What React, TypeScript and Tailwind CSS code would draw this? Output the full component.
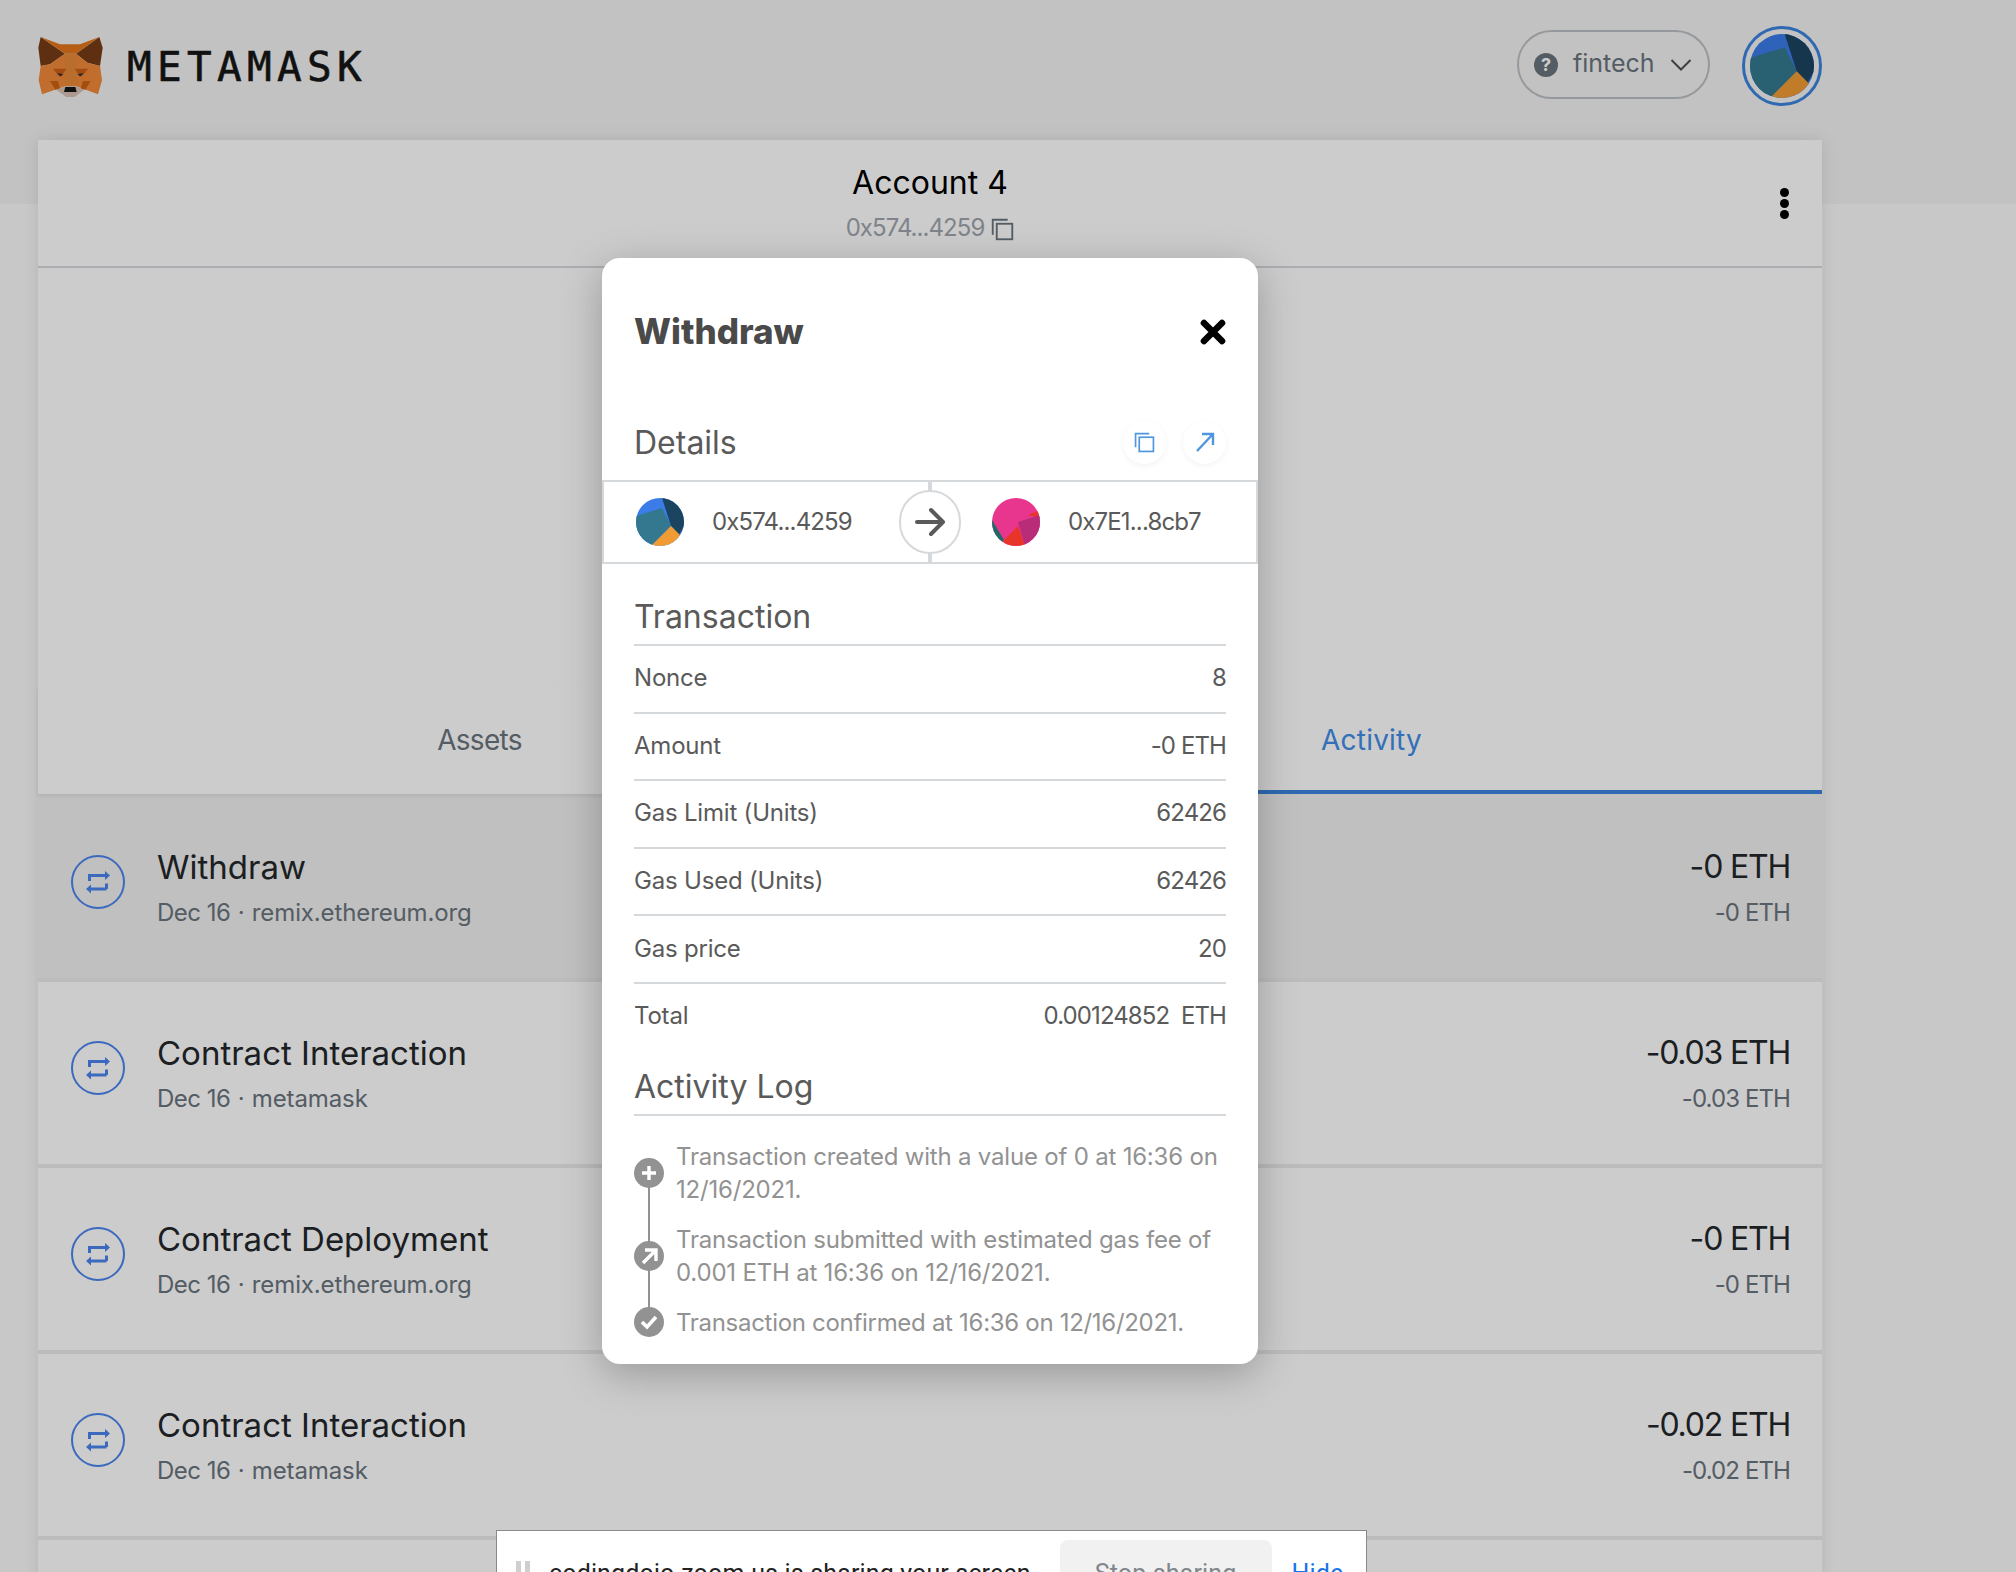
import React from "react";

const rows = [
  { t: "Withdraw", s: "remix.ethereum.org", a: "-0 ETH", hl: true },
  { t: "Contract Interaction", s: "metamask", a: "-0.03 ETH" },
  { t: "Contract Deployment", s: "remix.ethereum.org", a: "-0 ETH" },
  { t: "Contract Interaction", s: "metamask", a: "-0.02 ETH" },
  { t: "", s: "", a: "", empty: true },
];

const details: [string, string][] = [
  ["Nonce", "8"],
  ["Amount", "-0 ETH"],
  ["Gas Limit (Units)", "62426"],
  ["Gas Used (Units)", "62426"],
  ["Gas price", "20"],
];

function Fox() {
  return (
    <svg width="65" height="60" viewBox="0 0 195 180">
      <polygon points="8,0 81,50 36,82 8,87 1,32" fill="#763D16" />
      <polygon points="184,0 114,50 148,77 186,87 194,32" fill="#763D16" />
      <polygon points="8,0 66,22 126,22 184,0 114,50 81,50" fill="#E4761B" />
      <polygon points="8,87 36,82 81,50 114,50 148,77 186,87 192,130 180,172 135,155 115,148 82,148 60,155 12,172 2,130" fill="#F0893A" />
      <polygon points="81,50 114,50 118,140 80,140" fill="#E88A3A" />
      <polygon points="45,95 85,95 70,120 60,115" fill="#CD6116" />
      <polygon points="150,95 110,95 125,120 135,115" fill="#CD6116" />
      <polygon points="36,132 60,132 66,155 52,158" fill="#CD6116" />
      <polygon points="158,132 135,132 128,155 142,158" fill="#CD6116" />
      <polygon points="55,158 80,148 115,148 138,158 110,180 85,180" fill="#D7C1B3" />
      <polygon points="82,150 112,150 116,165 78,165" fill="#161616" />
      <polygon points="58,108 76,112 66,118" fill="#233447" />
      <polygon points="136,108 118,112 128,118" fill="#233447" />
    </svg>
  );
}

function AccountIcon({ size }: { size: number }) {
  return (
    <svg width={size} height={size} viewBox="0 0 48 48" className="rounded-full shrink-0">
      <rect width="48" height="48" fill="#3B7CE8" />
      <polygon points="0,18 26,10 35,28 15,48 0,48" fill="#34788F" />
      <polygon points="26,0 48,0 48,28 43,37 35,28" fill="#1B4460" />
      <polygon points="35,28 44,37 37,48 15,48" fill="#F09B33" />
    </svg>
  );
}

function PinkIcon() {
  return (
    <svg width="48" height="48" viewBox="0 0 48 48" className="rounded-full shrink-0">
      <rect width="48" height="48" fill="#E8368F" />
      <polygon points="0,22 12,42 6,48 0,48" fill="#1E6A64" />
      <polygon points="12,42 26,28 33,48 12,48" fill="#E8352A" />
      <polygon points="36,17 48,12 48,20" fill="#E8352A" />
      <polygon points="26,24 48,17 48,35 33,48" fill="#B82C78" />
    </svg>
  );
}

function TxIcon() {
  return (
    <span className="w-[54px] h-[54px] rounded-full border-2 border-[#4a84ee] flex items-center justify-center shrink-0">
      <svg width="26" height="26" viewBox="0 0 26 26" fill="none" stroke="#4a84ee" strokeWidth="3">
        <path d="M4.5 12V6.5H21" />
        <path d="M21.5 20H4.5" />
        <path d="M21.5 14.5V20" />
        <polygon points="20,2 25,6.5 20,11" fill="#4a84ee" stroke="none" />
        <polygon points="6,15.5 1,20 6,24.5" fill="#4a84ee" stroke="none" />
      </svg>
    </span>
  );
}

function CopyIcon({ color, size }: { color: string; size: number }) {
  return (
    <svg width={size} height={size} viewBox="0 0 20 20" fill="none" stroke={color} strokeWidth="1.6">
      <rect x="5" y="5" width="13.5" height="13.5" />
      <path d="M14.5 1.5H1.5V14.5" />
    </svg>
  );
}

function LogDot({ children }: { children: React.ReactNode }) {
  return (
    <span className="w-[30px] h-[30px] rounded-full bg-[#929292] flex items-center justify-center shrink-0 z-10">
      {children}
    </span>
  );
}

export default function App() {
  return (
    <div className="relative h-[1572px] overflow-hidden bg-[linear-gradient(#f3f3f3_204px,#fbfbfb_204px)] font-['Inter',sans-serif] text-[#24272a]">
      <header className="h-[140px] flex items-start justify-between pl-[38px] pr-[194px]">
        <div className="flex items-center gap-[24px] pt-[36px]">
          <Fox />
          <span className="mt-[1px] font-['DejaVu_Sans_Mono',monospace] text-[41px] leading-[60px] tracking-[5.3px] text-[#161616] [-webkit-text-stroke:0.6px_#161616]">METAMASK</span>
        </div>
        <div className="flex items-start gap-[32px] pt-[26px]">
          <div className="mt-[4px] w-[193px] h-[69px] rounded-full border-2 border-[#bbc0c5] flex items-center pl-[15px] gap-[15px] text-[#6a737d] text-[25px]">
            <span className="w-[24px] h-[24px] rounded-full bg-[#6a737d] text-white text-[18px] font-bold flex items-center justify-center">?</span>
            <span className="-mt-[2px]">fintech</span>
            <svg width="22" height="14" viewBox="0 0 22 14" fill="none" stroke="#4a4f55" strokeWidth="2"><path d="M1.5 2l9.5 9.5L20.5 2" /></svg>
          </div>
          <div className="w-[80px] h-[80px] rounded-full border-[3px] border-[#3b84de] flex items-center justify-center">
            <AccountIcon size={64} />
          </div>
        </div>
      </header>

      <main className="mx-[38px] w-[1784px] bg-white shadow-[0_0_16px_rgba(0,0,0,0.1)]">
        <div className="relative h-[128px] border-b-2 border-[#d6d9dc] flex flex-col items-center pt-[23px]">
          <span className="text-[32px] leading-[40px] text-black">Account 4</span>
          <span className="mt-[7px] flex items-center gap-[7px] text-[24px] tracking-[-0.95px] leading-[36px] text-[#9fa6ae]">
            0x574...4259 <span className="mt-[2px]"><CopyIcon color="#6a737d" size={23} /></span>
          </span>
          <span className="absolute right-[33px] top-[48px] flex flex-col gap-[2px]">
            <i className="block w-[9px] h-[9px] rounded-full bg-black" />
            <i className="block w-[9px] h-[9px] rounded-full bg-black" />
            <i className="block w-[9px] h-[9px] rounded-full bg-black" />
          </span>
        </div>
        <div className="h-[419px]" />
        <div className="h-[107px] flex items-start text-[28px] leading-[40px]">
          <div className="w-[892px] h-full flex justify-center pr-[9px] pt-[33px] text-[#6a737d] tracking-[-0.7px] shadow-[0_2px_4px_rgba(0,0,0,0.08)]">Assets</div>
          <div className="w-[892px] h-full flex justify-center pr-[9px] pt-[33px] text-[#3f8de8] border-b-[4px] border-[#3a84de] tracking-[0.2px]">Activity</div>
        </div>
        {rows.map((r, i) => (
          <div key={i} className={`border-b-4 border-[#ebebeb] flex items-start justify-between pl-[33px] pr-[32px] ${i === 0 ? "h-[188px] pt-[52px]" : "h-[186px] pt-[50px]"} ${r.hl ? "bg-[#f0f0f0]" : ""}`}>
            {!r.empty && (
              <>
                <div className="flex items-start gap-[32px]">
                  <div className="pt-[9px]"><TxIcon /></div>
                  <div>
                    <div className="text-[33px] leading-[42px]">{r.t}</div>
                    <div className="mt-[5px] text-[24px] leading-[40px] text-[#6a737d]"><span className="tracking-[-0.5px]">Dec 16 <span className="mx-[1px]">·</span></span> <span className="tracking-[-0.12px]">{r.s}</span></div>
                  </div>
                </div>
                <div className="text-right">
                  <div className="text-[32px] tracking-[-1.2px] leading-[42px]">{r.a}</div>
                  <div className="mt-[5px] text-[24px] tracking-[-0.9px] leading-[40px] text-[#6a737d]">{r.a}</div>
                </div>
              </>
            )}
          </div>
        ))}
      </main>

      <div className="absolute inset-0 bg-black/20 flex justify-center items-start pt-[258px] pr-[156px]">
        <section className="w-[656px] h-[1106px] bg-white rounded-[18px] shadow-[0_10px_40px_rgba(0,0,0,0.25)] text-[#5a5a5a] overflow-hidden">
          <div className="h-[146px] px-[32px] flex items-center justify-between">
            <h1 className="text-[35px] font-extrabold text-[#4a4a4a]">Withdraw</h1>
            <svg width="26" height="26" viewBox="0 0 26 26" stroke="#000" strokeWidth="6.6" strokeLinecap="round" className="mt-[2px]"><path d="M4 4l18 18M22 4L4 22" /></svg>
          </div>
          <div className="h-[76px] px-[32px] flex items-center justify-between">
            <h2 className="text-[32px] text-[#5a5a5a] mt-[2px]">Details</h2>
            <div className="flex gap-[17px]">
              <span className="w-[43px] h-[43px] rounded-full bg-white shadow-[0_2px_6px_rgba(0,0,0,0.05)] flex items-center justify-center"><CopyIcon color="#4f96de" size={21} /></span>
              <span className="w-[43px] h-[43px] rounded-full bg-white shadow-[0_2px_6px_rgba(0,0,0,0.05)] flex items-center justify-center">
                <svg width="22" height="22" viewBox="0 0 22 22" fill="none" stroke="#4f96de" strokeWidth="2.4"><path d="M3 20L19 3M8 3h11v11" /></svg>
              </span>
            </div>
          </div>
          <div className="relative h-[84px] border-2 border-[#d6d9dc] flex items-center text-[24px] tracking-[-0.85px] text-[#5a5a5a]">
            <div className="w-1/2 flex items-center gap-[28px] pl-[32px]"><AccountIcon size={48} /><span>0x574...4259</span></div>
            <div className="w-1/2 flex items-center gap-[28px] pl-[62px]"><PinkIcon /><span>0x7E1...8cb7</span></div>
            <span className="absolute left-[324px] top-0 bottom-0 w-[4px] bg-[#d6d9dc]" />
            <span className="absolute left-[295px] top-[8px] w-[62px] h-[64px] rounded-full bg-white border-2 border-[#d6d9dc] flex items-center justify-center">
              <svg width="30" height="30" viewBox="0 0 30 30" fill="none" stroke="#5a5a5a" strokeWidth="4" strokeLinecap="round" strokeLinejoin="round"><path d="M2 15h25M16 3l12 12-12 12" /></svg>
            </span>
          </div>
          <div className="px-[32px]">
            <h2 className="h-[82px] pt-[33px] text-[32px] leading-[40px] border-b-2 border-[#d6d9dc]">Transaction</h2>
            {details.map(([k, v]) => (
              <div key={k} className="h-[67.6px] pb-[1px] border-b-2 border-[#d6d9dc] flex items-center justify-between text-[24px]"><span className="tracking-[-0.2px]">{k}</span><span className="tracking-[-0.9px]">{v}</span></div>
            ))}
            <div className="h-[67px] pb-[2px] flex items-center justify-between text-[24px]"><span className="tracking-[-0.2px]">Total</span><span className="tracking-[-0.9px]">0.00124852&nbsp;&nbsp;ETH</span></div>
            <h2 className="h-[65px] pt-[16px] text-[32px] leading-[40px] border-b-2 border-[#d6d9dc]">Activity Log</h2>
            <div className="relative pt-[24px] flex flex-col gap-[17px] text-[24px] tracking-[-0.2px] leading-[33px] text-[#929292]">
              <span className="absolute left-[14px] top-[56px] h-[150px] w-[2px] bg-[#929292]" />
              <div className="flex items-center gap-[12px]">
                <LogDot><svg width="16" height="16" viewBox="0 0 16 16" stroke="#fff" strokeWidth="3.4"><path d="M8 1v14M1 8h14" /></svg></LogDot>
                <span>Transaction created with a value of 0 at 16:36 on 12/16/2021.</span>
              </div>
              <div className="flex items-center gap-[12px]">
                <LogDot><svg width="18" height="18" viewBox="0 0 18 18" fill="none" stroke="#fff" strokeWidth="3.4"><path d="M3 16L15 4M5 3h11v11" /></svg></LogDot>
                <span>Transaction submitted with estimated gas fee of 0.001 ETH at 16:36 on 12/16/2021.</span>
              </div>
              <div className="flex items-center gap-[12px]">
                <LogDot><svg width="18" height="18" viewBox="0 0 18 18" fill="none" stroke="#fff" strokeWidth="3.6"><path d="M2 9l5 5L16 4" /></svg></LogDot>
                <span className="tracking-[-0.3px]">Transaction confirmed at 16:36 on 12/16/2021.</span>
              </div>
            </div>
          </div>
        </section>
      </div>

      <div className="absolute left-[496px] top-[1530px] w-[871px] h-[60px] bg-white border border-[#8a8a8a] flex items-start pl-[19px] text-[25px] tracking-[0.15px] font-['Roboto',sans-serif]">
        <span className="mt-[30px] flex gap-[4px]"><i className="block w-[5px] h-[24px] bg-[#cfcfcf]" /><i className="block w-[5px] h-[24px] bg-[#cfcfcf]" /></span>
        <span className="ml-[19px] mt-[24px] text-[#222] whitespace-nowrap">codingdojo.zoom.us is sharing your screen.</span>
        <span className="ml-[22px] mt-[9px] w-[212px] h-[60px] rounded-[8px] bg-[#f1f1f1] text-[#80868b] text-center pt-[15px]">Stop sharing</span>
        <span className="ml-[20px] mt-[24px] text-[#1a73e8]">Hide</span>
      </div>
    </div>
  );
}
